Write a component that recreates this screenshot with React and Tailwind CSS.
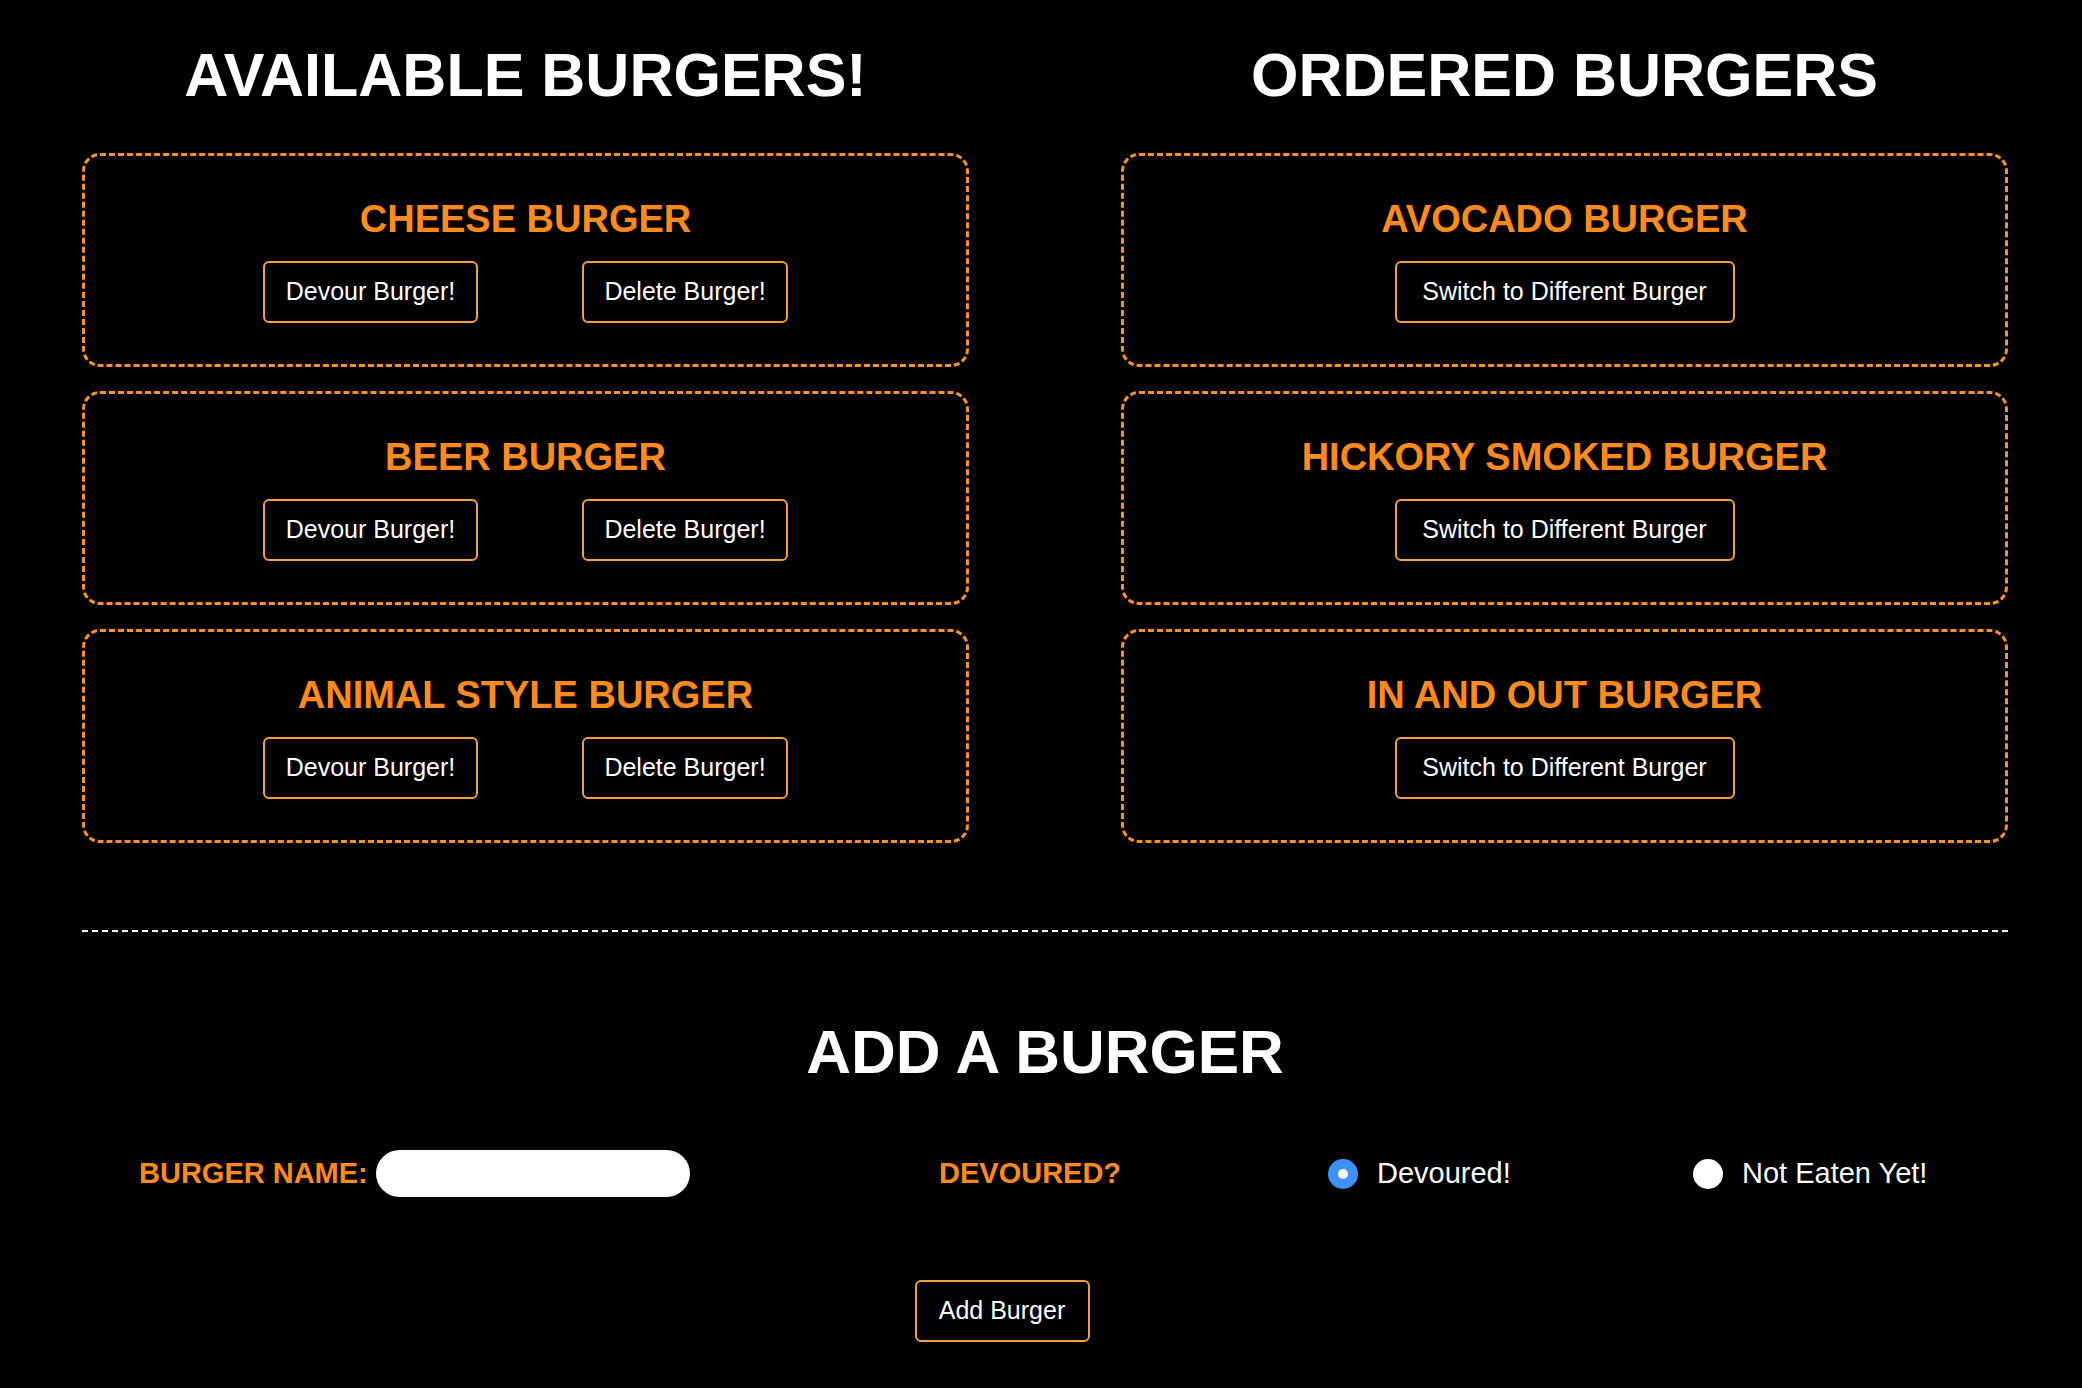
const available = ['CHEESE BURGER', 'BEER BURGER', 'ANIMAL STYLE BURGER']
const ordered = ['AVOCADO BURGER', 'HICKORY SMOKED BURGER', 'IN AND OUT BURGER']

function ActionButton({ label, width }) {
  return (
    <button
      className={`flex h-[62px] items-center justify-center rounded-[6px] border-2 border-[#f2a13c] bg-black text-[25px] text-white ${width}`}
    >
      {label}
    </button>
  )
}

function BurgerCard({ name, children }) {
  return (
    <div className="flex h-[214px] flex-col items-center rounded-[18px] border-[3px] border-dashed border-[#ff9224] pt-[43px]">
      <h3 className="text-[38px] font-bold leading-[40px] text-[#ff8a1e]">{name}</h3>
      <div className="mt-[22px] flex gap-[104px]">{children}</div>
    </div>
  )
}

function Radio({ checked, label }) {
  return (
    <label className="flex items-center gap-[19px]">
      {checked ? (
        <span className="flex h-[30px] w-[30px] items-center justify-center rounded-full bg-[#3d93f5]">
          <span className="h-[10px] w-[10px] rounded-full bg-white" />
        </span>
      ) : (
        <span className="h-[30px] w-[30px] rounded-full bg-white" />
      )}
      <span className="text-[29px] text-white">{label}</span>
    </label>
  )
}

export default function App() {
  return (
    <div className="min-h-[1388px] bg-black pl-[82px] pr-[74px] pb-[40px] pt-[45px] font-['Liberation_Sans',Arial,sans-serif]">
      <div className="grid grid-cols-2 gap-x-[152px]">
        <div>
          <h1 className="text-center text-[61px] font-bold leading-none text-white">AVAILABLE BURGERS!</h1>
          <div className="mt-[47px] flex flex-col gap-[24px]">
            {available.map(b => (
              <BurgerCard key={b} name={b}>
                <ActionButton label="Devour Burger!" width="w-[215px]" />
                <ActionButton label="Delete Burger!" width="w-[206px]" />
              </BurgerCard>
            ))}
          </div>
        </div>
        <div>
          <h1 className="text-center text-[61px] font-bold leading-none text-white">ORDERED BURGERS</h1>
          <div className="mt-[47px] flex flex-col gap-[24px]">
            {ordered.map(b => (
              <BurgerCard key={b} name={b}>
                <ActionButton label="Switch to Different Burger" width="w-[340px]" />
              </BurgerCard>
            ))}
          </div>
        </div>
      </div>

      <hr className="mt-[87px] border-0 border-t-2 border-dashed border-white" />

      <h2 className="mt-[89px] text-center text-[62px] font-bold leading-none text-white">ADD A BURGER</h2>

      <div className="mt-[67px] flex h-[47px] items-center pl-[57px]">
        <div className="flex w-[800px] items-center gap-[8px]">
          <span className="text-[29px] font-bold text-[#ff8a1e]">BURGER NAME:</span>
          <input className="h-[47px] w-[314px] rounded-full bg-white px-4 text-[22px] text-black outline-none" />
        </div>
        <div className="w-[389px] text-[29px] font-bold text-[#ff8a1e]">DEVOURED?</div>
        <div className="w-[365px]">
          <Radio checked label="Devoured!" />
        </div>
        <Radio label="Not Eaten Yet!" />
      </div>

      <div className="mt-[83px] flex justify-center pr-[86px]">
        <ActionButton label="Add Burger" width="w-[175px]" />
      </div>
    </div>
  )
}
